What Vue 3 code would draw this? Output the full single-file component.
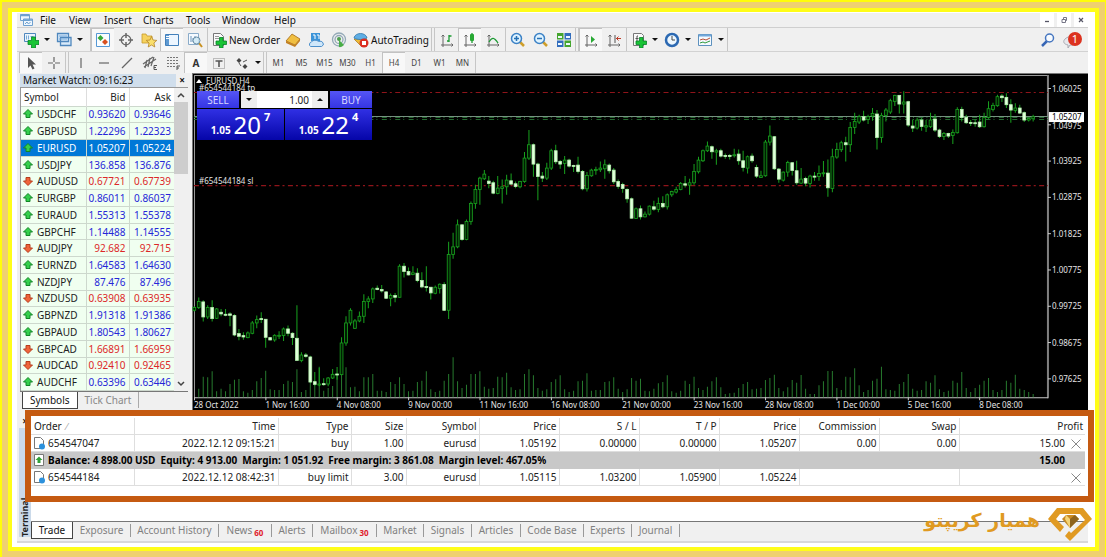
<script setup>
import { ref } from 'vue'

const menus = ['File', 'View', 'Insert', 'Charts', 'Tools', 'Window', 'Help']
const frames = ['M1', 'M5', 'M15', 'M30', 'H1', 'H4', 'D1', 'W1', 'MN']
const timeframe = ref('H4')
const lots = ref('1.00')

const quotes = [
  ['USDCHF', '0.93620', '0.93646', 1],
  ['GBPUSD', '1.22296', '1.22323', 1],
  ['EURUSD', '1.05207', '1.05224', 1],
  ['USDJPY', '136.858', '136.876', 1],
  ['AUDUSD', '0.67721', '0.67739', 0],
  ['EURGBP', '0.86011', '0.86037', 1],
  ['EURAUD', '1.55313', '1.55378', 1],
  ['GBPCHF', '1.14488', '1.14555', 1],
  ['AUDJPY', '92.682', '92.715', 0],
  ['EURNZD', '1.64583', '1.64630', 1],
  ['NZDJPY', '87.476', '87.496', 1],
  ['NZDUSD', '0.63908', '0.63935', 0],
  ['GBPNZD', '1.91318', '1.91386', 1],
  ['GBPAUD', '1.80543', '1.80627', 1],
  ['GBPCAD', '1.66891', '1.66959', 0],
  ['AUDCAD', '0.92410', '0.92465', 0],
  ['AUDCHF', '0.63396', '0.63446', 1],
]

const columns = ['Time', 'Type', 'Size', 'Symbol', 'Price', 'S / L', 'T / P', 'Price', 'Commission', 'Swap']
const openOrder = ['2022.12.12 09:15:21', 'buy', '1.00', 'eurusd', '1.05192', '0.00000', '0.00000', '1.05207', '0.00', '0.00']
const pendingOrder = ['2022.12.12 08:42:31', 'buy limit', '3.00', 'eurusd', '1.05115', '1.03200', '1.05900', '1.05224']

const tabs = [
  ['Trade'], ['Exposure'], ['Account History'], ['News', '60'], ['Alerts'], ['Mailbox', '30'],
  ['Market'], ['Signals'], ['Articles'], ['Code Base'], ['Experts'], ['Journal'],
]

const dates = ['28 Oct 2022', '1 Nov 16:00', '4 Nov 08:00', '9 Nov 00:00', '11 Nov 16:00', '16 Nov 08:00', '21 Nov 00:00', '23 Nov 16:00', '28 Nov 08:00', '1 Dec 00:00', '5 Dec 16:00', '8 Dec 08:00']
const prices = ['1.06025', '1.04975', '1.03925', '1.02875', '1.01825', '1.00775', '0.99725', '0.98675', '0.97625']

// Bars as high, body top, body bottom, low in thirds of a pixel; u = rising, d = falling.
const october = `198,202,210,214u 172,184,202,206u 180,185,230,244d 195,202,230,236u 180,202,235,244d 203,206,234,236u 206,216,221,228d 206,222,224,228d 216,221,225,258d 222,226,284,288d 266,280,288,300d 276,286,290,298d 274,278,292,294u 242,248,279,282u 226,238,248,264u 216,235,238,248d 236,237,291,322d 290,292,299,300d 282,285,299,304u 273,285,287,296u 262,266,286,302u 256,266,279,288d 276,279,292,314d 195,294,360,362d 336,344,361,366u 338,344,348,352d 346,350,425,428d 395,424,432,436d 382,431,433,438u 414,430,432,436d 410,413,431,438u 386,402,413,416u 380,401,403,418d 291,308,403,405u 228,248,308,316u 204,210,248,256u 236,242,264,266u 214,228,242,246u 162,184,228,248u 168,176,184,204u 142,146,176,188u 136,144,148,150d 134,148,152,157d 152,155,174,176d 160,166,174,198u 158,166,171,186d 72,78,171,172u 68,78,94,112d 82,94,104,106d 78,98,103,105u 84,99,121,126d 96,121,140,144d 78,139,142,154d 140,141,158,178d 136,141,159,162u 130,132,145,160u 126,133,210,212d`
const november = `485,523,690,716u 458,500,523,536u 418,434,500,504u 432,434,478,482d 418,424,478,480u 364,370,424,434u 314,328,370,386u 290,294,328,374u 270,282,296,300u 288,303,310,324d 302,308,339,342d 288,324,340,342u 298,320,325,370u 284,300,320,344u 280,302,312,314d 304,311,319,324d 302,304,320,324u 216,234,304,308u 150,194,234,240u 190,194,252,290d 248,252,289,360d 276,288,294,306d 248,264,294,300u 206,212,264,270u 194,212,245,252d 240,244,252,266d 228,240,250,282u 236,240,258,262d 254,256,258,276d 230,255,274,280d 270,274,326,330d 276,286,326,334u 266,270,287,290u 260,268,271,284u 244,264,269,276u 238,254,266,296u 250,255,272,280d 264,270,305,312d 298,304,319,326d 308,313,325,338d 324,328,356,368d 352,356,414,416d 382,386,415,416u 376,386,410,418d 394,402,410,412u 376,378,402,406u 362,380,387,392d 352,370,388,396u 348,370,380,384d 340,344,380,388u 332,334,344,350u 320,328,336,340u 306,310,328,330u 288,311,315,322d 296,308,315,344u 252,274,308,314u 230,240,275,280u 208,212,242,246u 184,198,212,216u 196,200,215,236d 206,212,216,254u 206,212,228,232d 220,226,228,236d 222,226,228,238d 206,224,227,232u 208,222,242,254d 212,242,262,274d 226,230,264,280u 220,228,242,248d 254,262,288,294d 272,287,292,294u 180,186,287,290u 136,168,186,196u 168,170,266,270d 264,267,297,308d 274,276,300,304u 242,247,276,290u 246,248,271,286d 242,272,308,314d 264,297,309,312u 290,295,309,318d 284,288,310,322u 276,288,290,302d 256,280,289,302u 243,278,281,290u 238,279,323,350d 206,230,325,336u 188,208,231,236u 182,188,209,216u 170,188,194,244d 126,142,194,216u 98,124,142,162u 104,110,126,132u 92,110,120,124d 104,110,118,132u 84,100,108,122u 90,102,172,208d 98,106,172,188u 84,90,106,124u 56,62,96,102u 44,46,64,78u 45,46,72,100d 34,66,72,100u 62,65,135,140d 118,138,144,156d 112,120,144,148u 114,120,139,152d 120,137,141,156u 98,120,140,144u 102,117,150,156d 146,150,169,174d 156,160,169,180u 158,160,168,174d 148,157,166,192u 82,88,158,160u 80,88,112,124d 104,112,128,132d 120,127,130,138d 118,128,131,140d 104,126,140,144d 98,112,140,142u 64,86,112,116u 68,76,88,94u 44,50,77,80u 42,48,53,66d 40,52,74,84d 58,74,90,128d 70,84,91,98u 74,84,99,102d 94,98,120,126d 112,115,120,124u 104,110,116,124u`

const step = 4.457
const barX = (i) => 194.3 + i * step
const parse = (text, top) => text.split(' ').map((s) => {
  const [high, open, close, low] = s.slice(0, -1).split(',').map((n) => Number(n) / 3 + top)
  return { high, open, close, low, up: s.endsWith('u') }
})
const candles = [...parse(october, 240), ...parse(november, 80)].map((c, i) => ({ ...c, x: barX(i) }))

const volumes = [0, 26, 62, 60, 78, 18, 26, 18, 40, 53, 55, 18, 14, 22, 48, 58, 80, 24, 22, 22, 40, 50, 46, 84, 16, 22, 78, 50, 92, 20, 28, 34, 72, 92, 90, 30, 32, 18, 60, 60, 70, 20, 20, 16, 46, 40, 60, 40, 18, 20, 46, 50, 78, 24, 16, 20, 50, 70, 120, 48, 28, 38, 70, 70, 78, 32, 26, 28, 62, 60, 74, 30, 22, 24, 70, 84, 66, 28, 20, 24, 46, 54, 66, 24, 16, 20, 48, 50, 72, 20, 22, 22, 46, 48, 60, 26, 16, 24, 58, 50, 56, 20, 18, 26, 42, 46, 66, 18, 14, 20, 50, 40, 62, 28, 22, 32, 48, 60, 30, 10, 12, 14, 28, 40, 46, 24, 26, 28, 52, 58, 68, 28, 18, 30, 52, 44, 67, 26, 10, 10, 36, 48, 79, 79, 28, 22, 62, 60, 87, 36, 16, 22, 50, 56, 92, 24, 22, 20, 40, 46, 70, 26, 20, 22, 48, 44, 66, 24, 16, 20, 50, 44, 76, 28, 16, 28, 38, 50, 58, 22, 16, 22, 50, 44, 68, 26, 22, 16, 10]
</script>

<template>
  <div class="edge"><div class="band"><div class="page">
    <main class="app">
      <header class="menubar">
        <svg class="appicon" viewBox="0 0 16 14"><path d="M1.500 1.500h9v6h-9z M4.500 6h9v6.500h-9z" fill="#eef6fd" stroke="#6fa0cf"/><path d="M1.500 2.500h9M4.500 7h9" stroke="#6fa0cf" stroke-width="1.500"/><path d="M6 11l2-2 1.500 2 2-2" stroke="#6fa0cf" fill="none"/></svg>
        <nav class="menus"><button v-for="m in menus" :key="m">{{ m }}</button></nav>
        <div class="winbtns">
          <button aria-label="Minimize"><svg viewBox="0 0 14 14"><path d="M5 8.500h4" stroke="#556" stroke-width="1.300"/></svg></button>
          <button aria-label="Restore"><svg viewBox="0 0 14 14"><path d="M5 6.500h3.500v3h-3.500z M6.500 6v-1.500h3v3h-1" fill="none" stroke="#778" /></svg></button>
          <button aria-label="Close"><svg viewBox="0 0 14 14"><path d="M5 5l4 4M9 5l-4 4" stroke="#556" stroke-width="1.200"/></svg></button>
        </div>
      </header>

      <div class="toolbar">
        <button class="tb" aria-label="New chart"><svg viewBox="0 0 16 16"><path d="M1.500 1.500h11v8h-11z" fill="#eaf4fc" stroke="#4f87bd"/><path d="M3.500 3.500v4m2-4v4m2-3h3" stroke="#78a9d5"/><path d="M8.500 5h4v3.500H16v4h-3.500V16h-4v-3.500H5v-4h3.500z" fill="#19c435" stroke="#08832a" stroke-width=".8"/></svg></button>
        <button class="caret" aria-label="Charts list"></button>
        <button class="tb" aria-label="Profiles"><svg viewBox="0 0 16 16"><path d="M4.500 5.500h10.500v8h-10.500z M1.500 1.500h11v8h-11z" fill="#d9eafa" stroke="#4f87bd" stroke-width="1.300"/><path d="M3 4h8M3 7h8" stroke="#75a9dc"/></svg></button>
        <button class="caret" aria-label="Profiles list"></button>
        <i class="sep six"></i>
        <button class="tb on" aria-label="Market Watch"><svg viewBox="0 0 16 16"><path d="M1.500 1.500h13v13h-13z" fill="#fbfdff" stroke="#5598d5"/><path d="M5.500 3L8.500 6l-3 3-3-3z" fill="#37a936"/><path d="M10 7l3 3-3 3-3-3z" fill="#d9501e"/></svg></button>
        <button class="tb" aria-label="Data Window"><svg viewBox="0 0 16 16"><path d="M8 1v5M8 10v5M1 8h5M10 8h5" stroke="#666" stroke-width="1.500"/><circle cx="8" cy="8" r="4.800" fill="none" stroke="#666" stroke-width="1.300"/></svg></button>
        <button class="tb" aria-label="Navigator"><svg viewBox="0 0 16 16"><path d="M1 2h4l1 2h5v7H1z" fill="#f6d25e" stroke="#c79a2c" stroke-width=".8"/><path d="M10.500 4.500l1.500 3.500 3.800.4-2.900 2.600.9 4-3.300-2-3.300 2 .9-4-2.900-2.600 3.800-.4z" fill="#fadf6c" stroke="#b5852b" stroke-width=".8"/></svg></button>
        <button class="tb on" aria-label="Terminal"><svg viewBox="0 0 16 16"><path d="M1.500 2.500h13v11h-13z" fill="#edf6ff" stroke="#4380bb"/><path d="M2 3h3v10H2z" fill="#5f9ad2"/><path d="M2 4.500h3M2 6.500h3" stroke="#fff"/></svg></button>
        <button class="tb" aria-label="Strategy Tester"><svg viewBox="0 0 16 16"><path d="M1.500 1.500h10v11h-10z" fill="#f5faff" stroke="#8aabc9"/><path d="M4 4v6m2-4v4m2-6v3" stroke="#6893bb"/><path d="M12 11l3 4" stroke="#c99121" stroke-width="2"/><circle cx="9.500" cy="8.500" r="3.500" fill="#cce7f4" fill-opacity=".8" stroke="#688ca5"/></svg></button>
        <i class="sep"></i>
        <button class="wide order"><svg viewBox="0 0 16 16"><path d="M2.500 1.500h7l3 3v9h-10z" fill="#fafafa" stroke="#777"/><path d="M4 4.500h4M4 6.500h6" stroke="#999"/><path d="M8.500 5.500h3.500V9h3.500v3.500H12V16H8.500v-3.500H5V9h3.500z" fill="#19c435" stroke="#08832a" stroke-width=".8"/></svg>New Order</button>
        <button class="tb" aria-label="MetaEditor"><svg viewBox="0 0 16 16"><path d="M1 9l6-7 8 5-5 6z" fill="#f0bf41" stroke="#a36a16" stroke-width=".8"/><path d="M1 9l9 4 5-6v2l-5 6-9-4z" fill="#c38022"/></svg></button>
        <button class="tb" aria-label="Virtual hosting"><svg viewBox="0 0 16 16"><path d="M3 1h9v8H3z" fill="#3c94d8"/><path d="M5 3h2v4M9 3h2v4" stroke="#fff" fill="none"/><path d="M2.500 14.500a2.500 2.500 0 0 1 1-4.500 4 3 0 0 1 7-.5 3 2.500 0 0 1 3 5z" fill="#cfe7fa" stroke="#4c8fcb"/></svg></button>
        <button class="tb" aria-label="Signals"><svg viewBox="0 0 16 16"><g fill="none" stroke="#93a9b7" stroke-width="1.300"><circle cx="8" cy="7.500" r="6.500"/><circle cx="8" cy="7.500" r="4"/></g><circle cx="8" cy="7" r="2" fill="#4d9f50"/><path d="M8 8l5 5c-3 3-5 2-5 2z" fill="#49ad47"/></svg></button>
        <button class="wide auto"><svg viewBox="0 0 16 16"><path d="M1 7l7 7 6-7z" fill="#edbc39" stroke="#b07d20" stroke-width=".8"/><path d="M1 6c1-6 12-6 13 0-3 2-10 2-13 0z" fill="#5faee4" stroke="#3477ab" stroke-width=".8"/><circle cx="11" cy="11" r="4.500" fill="#db2d20"/><path d="M9 9h4v4H9z" fill="#fff"/></svg>AutoTrading</button>
        <i class="sep four"></i>
        <button class="tb" aria-label="Bar chart"><svg viewBox="0 0 16 16"><path d="M4 3v12M2 13h12M2.500 4.500L4 3l1.500 1.500M12.500 11.500L14 13l-1.500 1.500" class="axis"/><path d="M10 3v7M8 9h2M10 4h2.500" class="grn"/></svg></button>
        <button class="tb on" aria-label="Candlesticks"><svg viewBox="0 0 16 16"><path d="M4 3v12M2 13h12M2.500 4.500L4 3l1.500 1.500M12.500 11.500L14 13l-1.500 1.500" class="axis"/><path d="M10 1v10" class="grn"/><rect x="8" y="2" width="4" height="7" rx="1" fill="#28a934"/></svg></button>
        <button class="tb" aria-label="Line chart"><svg viewBox="0 0 16 16"><path d="M4 3v12M2 13h12M2.500 4.500L4 3l1.500 1.500M12.500 11.500L14 13l-1.500 1.500" class="axis"/><path d="M4 10c3-5 5-5 9 1" class="grn"/></svg></button>
        <i class="sep"></i>
        <button class="tb" aria-label="Zoom in"><svg viewBox="0 0 16 16"><path d="M10 10l4 4" stroke="#ce9e2a" stroke-width="2.500"/><circle cx="6.500" cy="6.500" r="5" fill="#dff3ff" stroke="#3c82c6" stroke-width="1.500"/><path d="M4 6.500h5M6.500 4v5" stroke="#2670b4" stroke-width="1.500"/></svg></button>
        <button class="tb" aria-label="Zoom out"><svg viewBox="0 0 16 16"><path d="M10 10l4 4" stroke="#ce9e2a" stroke-width="2.500"/><circle cx="6.500" cy="6.500" r="5" fill="#dff3ff" stroke="#3c82c6" stroke-width="1.500"/><path d="M4 6.500h5" stroke="#2670b4" stroke-width="1.500"/></svg></button>
        <button class="tb" aria-label="Tile windows"><svg viewBox="0 0 16 16"><path d="M1 1h6.500v6.500H1zM8.500 8.500H15V15H8.500z" fill="#45a52e"/><path d="M8.500 1H15v6.500H8.500zM1 8.500h6.500V15H1z" fill="#326dbd"/><path d="M2 4h4v2H2zM10 4h4v2h-4zM2 11h4v2H2zM10 11h4v2h-4z" fill="#edf8ff"/></svg></button>
        <i class="sep four"></i>
        <button class="tb on" aria-label="Auto scroll"><svg viewBox="0 0 16 16"><path d="M4 3v12M2 13h12M2.500 4.500L4 3l1.500 1.500M12.500 11.500L14 13l-1.500 1.500" class="axis"/><path d="M8 4l4 3.500L8 11z" fill="#28a934"/></svg></button>
        <button class="tb" aria-label="Chart shift"><svg viewBox="0 0 16 16"><path d="M4 3v12M2 13h12M2.500 4.500L4 3l1.500 1.500M12.500 11.500L14 13l-1.500 1.500" class="axis"/><path d="M9 3v8" stroke="#555"/><path d="M15 6.500h-5M12.500 4.500l-2 2 2 2" stroke="#bd3d2a" fill="none"/></svg></button>
        <i class="sep"></i>
        <button class="tb" aria-label="Indicators"><svg viewBox="0 0 16 16"><path d="M2.500 1.500h8l2 2v10h-10z" fill="#fafafa" stroke="#777"/><path d="M7 4H6v6M4.500 6.500h3" stroke="#555" fill="none"/><path d="M8.500 5.500h3.500V9h3.500v3.500H12V16H8.500v-3.500H5V9h3.500z" fill="#19c435" stroke="#08832a" stroke-width=".8"/></svg></button>
        <button class="caret" aria-label="Indicators list"></button>
        <button class="tb" aria-label="Periods"><svg viewBox="0 0 16 16"><circle cx="8" cy="8" r="6" fill="#eef8ff" stroke="#2c69b2" stroke-width="2.500"/><path d="M8 4v4h3" stroke="#444" fill="none"/></svg></button>
        <button class="caret" aria-label="Periods list"></button>
        <button class="tb" aria-label="Templates"><svg viewBox="0 0 16 16"><path d="M1.500 2.500h13v11h-13z" fill="#f4faff" stroke="#5e91be"/><path d="M2 3.500h12" stroke="#72a9dc" stroke-width="2"/><path d="M3 8l3-1 3 1 4-2" stroke="#b84e36" fill="none"/><path d="M3 11l3-1 2 1 5-2" stroke="#319a3d" fill="none"/></svg></button>
        <button class="caret" aria-label="Templates list"></button>
        <i class="sep"></i>
        <div class="right">
          <button aria-label="Search"><svg viewBox="0 0 16 16"><path d="M7 9l-5 5" stroke="#3766b5" stroke-width="2.500"/><circle cx="9.500" cy="6" r="4" fill="#f7fbff" stroke="#4575bf" stroke-width="1.500"/></svg></button>
          <button aria-label="Notifications" class="notes"><svg viewBox="0 0 20 18"><path d="M3 8c5-5 13-1 11 3-1 4-5 3-6 3l-2 3v-3C1 13 1 10 3 8z" fill="#e8e8ec" stroke="#aaaab2"/><circle cx="13" cy="8" r="7" fill="#dc321f"/></svg><b>1</b></button>
        </div>
      </div>

      <div class="toolbar second">
        <button class="tb on" aria-label="Cursor"><svg viewBox="0 0 16 16"><path d="M5 2v11l2.500-2.500 2 4 2-1-2-4H13z" fill="#555"/></svg></button>
        <button class="tb" aria-label="Crosshair"><svg viewBox="0 0 16 16"><path d="M8 2v5M8 9v5M2 8h5M9 8h5" class="ln"/></svg></button>
        <i class="sep four"></i>
        <button class="tb" aria-label="Vertical line"><svg viewBox="0 0 16 16"><path d="M8 3v10" class="ln"/></svg></button>
        <button class="tb" aria-label="Horizontal line"><svg viewBox="0 0 16 16"><path d="M3 8h10" class="ln"/></svg></button>
        <button class="tb" aria-label="Trendline"><svg viewBox="0 0 16 16"><path d="M3 13L13 3" class="ln"/></svg></button>
        <button class="tb" aria-label="Equidistant channel"><svg viewBox="0 0 16 16"><path d="M1 9L11 2M2 12L14 4M5 5L3 13M8 3L6 12M12 2L9 11" class="ln"/><path d="M15 10.500h-3v4h3M12 12.500h2" stroke="#555" fill="none"/></svg></button>
        <button class="tb" aria-label="Fibonacci"><svg viewBox="0 0 16 16"><path d="M2 2.500h12M2 5.500h12M2 8.500h12M2 11.500h8" stroke="#777" stroke-dasharray="2 1"/><path d="M15 11h-3v4M12 13h2" stroke="#555" fill="none"/></svg></button>
        <button class="tb on letter">A</button>
        <button class="tb" aria-label="Text label"><svg viewBox="0 0 16 16"><path d="M2.500 3.500h11v10h-11z" fill="none" stroke="#888" stroke-dasharray="1 1"/><path d="M4.500 6h7M8 6v6" stroke="#555" stroke-width="1.600"/></svg></button>
        <button class="tb" aria-label="Arrows"><svg viewBox="0 0 16 16"><path d="M5 3l2.500 2.500L5 8 2.500 5.500zM11 9l2.500 2.500L11 14l-2.500-2.500z" fill="#444"/><path d="M5 8l2 3M9 7l4-2" stroke="#555"/></svg></button>
        <button class="caret" aria-label="Arrows list"></button>
        <i class="sep four"></i>
        <button v-for="f in frames" :key="f" class="tb tf" :class="{ on: f === timeframe }" @click="timeframe = f">{{ f }}</button>
        <i class="sep"></i>
      </div>

      <div class="work">
        <section class="watch">
          <h2>Market Watch: 09:16:23<button aria-label="Close Market Watch">×</button></h2>
          <div class="list">
            <table>
              <thead><tr><th>Symbol</th><th>Bid</th><th>Ask</th></tr></thead>
              <tbody>
                <tr v-for="q in quotes" :key="q[0]" :class="{ down: !q[3], sel: q[0] === 'EURUSD' }">
                  <td><svg viewBox="0 0 10 10"><path v-if="q[3]" d="M5 .5L9.500 5H7v3.500H3V5H.5z" fill="#35cf4d" stroke="#128526"/><path v-else d="M5 9.500L.5 5H3V1.500h4V5h2.500z" fill="#f0643b" stroke="#b63c1c"/></svg>{{ q[0] }}</td>
                  <td>{{ q[1] }}</td><td>{{ q[2] }}</td>
                </tr>
              </tbody>
            </table>
            <div class="scroll">
              <svg viewBox="0 0 14 14"><path d="M4 9l3-3 3 3" /></svg>
              <span></span>
              <svg viewBox="0 0 14 14"><path d="M4 5l3 3 3-3" /></svg>
            </div>
          </div>
          <div class="watchtabs"><button class="active">Symbols</button><button>Tick Chart</button></div>
        </section>

        <section class="chart">
          <svg class="plot" viewBox="192 73 895 337">
            <rect x="192" y="73" width="895" height="337" fill="#000"/>
            <path d="M192.500 410V73.500H1087" stroke="#777" fill="none"/>
            <path d="M194.500 397V75.500H1047" stroke="#999" fill="none"/>
            <path d="M1047 75V398" stroke="#808080" stroke-width="2"/>
            <path d="M194 397.500H1047" stroke="#c8c8c8"/>
            <path d="M194 92.500H1047M194 185.500H1047" stroke="#8f141a" stroke-dasharray="5 3 2 3.400"/>
            <path d="M194 116.500H1047" stroke="#75917f"/>
            <path d="M194 117.500H1047M194 119.500H1047" stroke="#23682f" stroke-dasharray="5 3 1 4.400"/>
            <path v-for="(v, i) in volumes" :key="'v' + i" :d="`M${barX(i)} 397v${-v / 3}`" stroke="#277a2e"/>
            <g v-for="c in candles" :key="c.x">
              <path :d="`M${c.x} ${c.high}V${c.low}`" stroke="#18a31e"/>
              <rect :x="c.x - 1.400" :y="c.open" width="2.800" :height="Math.max(c.close - c.open, 1)" :fill="c.up ? '#001d02' : '#e2ffdc'" :stroke="c.up ? '#18a31e' : '#b9f5b2'" stroke-width=".8"/>
            </g>
            <g class="axistext">
              <template v-for="(p, i) in prices" :key="p">
                <path :d="`M1047 ${88.5 + i * 36.25}h3`" stroke="#ccc"/>
                <text x="1051" :y="(i === 1 ? 92.5 : 91.5) + i * 36.25">{{ p }}</text>
              </template>
              <rect x="1048" y="112" width="35" height="10" fill="#fff"/>
              <text x="1051" y="120" class="now">1.05207</text>
              <template v-for="(d, i) in dates" :key="d">
                <path :d="`M${194.5 + i * 71.3} 397v3`" stroke="#ccc"/>
                <text :x="194 + i * 71.3" y="408">{{ d }}</text>
              </template>
              <text x="206" y="84">EURUSD,H4</text>
              <text x="199" y="91">#654544184 tp</text>
              <text x="199" y="184">#654544184 sl</text>
              <path d="M196 83l3-4 3 4z" fill="#fff"/>
            </g>
          </svg>
          <div class="trade">
            <button class="side">SELL</button>
            <div class="lots"><button aria-label="Less"></button><input v-model="lots" aria-label="Volume"><button aria-label="More" class="up"></button></div>
            <button class="side">BUY</button>
            <div class="quote"><b>1.05</b><span>20</span><sup>7</sup></div>
            <div class="quote"><b>1.05</b><span>22</span><sup>4</sup></div>
          </div>
        </section>
      </div>

      <section class="terminal">
        <aside><button aria-label="Close Terminal">×</button><h2>Terminal</h2></aside>
        <div class="body">
          <table>
            <colgroup><col class="c1"><col class="c2"><col class="c3"><col class="c4"><col class="c5"><col v-for="n in 6" :key="n" class="c6"><col></colgroup>
            <thead><tr><th>Order <i>⁄</i></th><th v-for="(c, i) in columns" :key="i">{{ c }}</th><th>Profit</th></tr></thead>
            <tbody>
              <tr>
                <td><svg class="doc" viewBox="0 0 14 14"><path d="M2.500 1.500h6l3 3v8h-9z" fill="#fff" stroke="#777"/><circle cx="10" cy="10.500" r="3" fill="#2d91dc"/></svg>654547047</td>
                <td v-for="(c, i) in openOrder" :key="i">{{ c }}</td>
                <td>15.00<button aria-label="Close order"><svg viewBox="0 0 12 12"><path d="M1.500 1.500l9 9M10.500 1.500l-9 9"/></svg></button></td>
              </tr>
              <tr class="balance">
                <td colspan="11"><svg class="doc" viewBox="0 0 14 14"><path d="M2.500 1.500h9v11h-9z" fill="#fff" stroke="#777"/><path d="M7 3.500l3.500 3.500H8.500v3h-3V7h-2z" fill="#32a13a"/></svg>Balance: 4 898.00 USD&nbsp; Equity: 4 913.00&nbsp; Margin: 1 051.92&nbsp; Free margin: 3 861.08&nbsp; Margin level: 467.05%</td>
                <td>15.00</td>
              </tr>
              <tr>
                <td><svg class="doc" viewBox="0 0 14 14"><path d="M2.500 1.500h6l3 3v8h-9z" fill="#fff" stroke="#777"/><circle cx="10" cy="10.500" r="3" fill="#2d91dc"/></svg>654544184</td>
                <td v-for="(c, i) in pendingOrder" :key="i">{{ c }}</td><td colspan="2"></td>
                <td><button aria-label="Delete order"><svg viewBox="0 0 12 12"><path d="M1.500 1.500l9 9M10.500 1.500l-9 9"/></svg></button></td>
              </tr>
            </tbody>
          </table>
          <nav class="tabs"><button v-for="(t, i) in tabs" :key="t[0]" :class="{ active: i === 0 }">{{ t[0] }}<b v-if="t[1]">{{ t[1] }}</b></button></nav>
        </div>
        <div class="highlight"></div>
        <div class="brand"><span lang="fa" dir="rtl">همیار کریپتو</span>
          <svg viewBox="0 0 46 34"><path d="M10 1h26l9 11-22 22-5-5 4-5 2 2L38 13l-5-6H13l-4 5 8 8-4 5L1 12z" fill="#e09a22"/><path d="M15 12l4-4h9l4 4-9 9z" fill="#c88a24"/><path d="M19 8l-1 4 5 9V12z" fill="#f3d477"/><path d="M23 12l5-4 4 4-9 9z" fill="#8e641e"/></svg>
        </div>
      </section>
    </main>
  </div></div></div>
</template>

<style>
body { margin: 0; }
</style>

<style scoped>
* { box-sizing: border-box; }
button { font: inherit; color: inherit; background: none; border: 0; padding: 0; margin: 0; white-space: nowrap; }
h2 { margin: 0; font: inherit; }
table { border-collapse: collapse; table-layout: fixed; width: 100%; }
th { font-weight: 400; }
th, td { padding: 0; white-space: nowrap; }
svg { display: block; }
.edge { border: solid #fffd08; border-width: 2px 1px 0 2px; font: 10px/14px "Noto Sans", "Open Sans", sans-serif; color: #222; }
.band { border: 6px solid #efd070; }
.page { border: 4px solid #fffd18; background: #fff; min-height: calc(100vh - 14px); padding: 1px 7px 4px 5px; }
.app { background: #f0f0f0; }
.menubar { display: flex; height: 15px; border-bottom: 1px solid #cfcfcf; }
.appicon { width: 16px; height: 14px; margin: 0 5px 0 2px; }
.menus { display: grid; grid-template-columns: 29px 35px 39px 43px 36px 52px 30px; height: 14px; color: #111; }
.menus button { text-align: left; }
.winbtns { margin-left: auto; display: flex; gap: 3px; }
.winbtns button { width: 14px; height: 14px; background: #fff; }
.toolbar { display: flex; height: 23px; padding-left: 2px; align-items: stretch; }
.toolbar.second { height: 22px; border-top: 1px solid #d2d2d2; }
.tb { width: 23px; display: grid; place-items: center; flex: none; }
.tb svg, .wide svg { width: 16px; height: 16px; }
.on { background: #f8f8f8; border: solid #c2c2c2; border-width: 1px 0 0 1px; }
.caret { width: 10px; flex: none; display: grid; place-items: center; }
.caret::before { content: ""; border: 3px solid transparent; border-top-color: #111; border-bottom: 0; }
.sep { width: 2px; flex: none; border-right: 1px solid #c6c6c6; }
.sep.four { width: 4px; border-left: 1px solid #c6c6c6; }
.sep.six { width: 6px; }
.wide { display: flex; align-items: center; flex: none; color: #111; }
.wide svg { margin: 0 2px 0 3px; flex: none; }
.order { width: 73px; }
.auto { width: 81px; }
.axis { fill: none; stroke: #666; stroke-width: 1; }
.grn { fill: none; stroke: #1b9a32; stroke-width: 1.3; }
.ln { fill: none; stroke: #666; stroke-width: 1.2; }
.right { margin-left: auto; display: flex; align-items: center; gap: 6px; padding-right: 6px; }
.right svg { width: 16px; height: 16px; }
.right .notes { position: relative; }
.right .notes svg { width: 20px; height: 18px; }
.notes b { position: absolute; left: 6px; top: 1px; width: 14px; text-align: center; color: #fff; font-weight: 400; font-size: 11px; }
.letter { font-weight: 700; color: #333; }
.tf { font-size: 8px; color: #444; }
.work { display: flex; }
.watch { width: 175px; flex: none; padding: 1px 4px 0 3px; display: flex; flex-direction: column; }
.watch h2 { display: flex; justify-content: space-between; background: #d0deec; height: 13px; line-height: 13px; padding: 0 0 0 3px; color: #111; }
.watch h2 button { width: 12px; background: #f0f0f0; font-weight: 700; }
.list { display: flex; border: solid #999; border-width: 1px 0 0 1px; }
.list table { background: #f0fff0; height: 303px; }
.list thead { background: #fff; }
.list th { text-align: right; height: 18px; padding-right: 3px; }
.list th:first-child { text-align: left; padding-left: 3px; width: 65px; }
.list th:nth-child(2) { width: 43px; }
.list th + th { border-left: 1px solid #ddd; }
.list td { text-align: right; color: #2626d8; border: 1px solid #cdd8cd; border-width: 1px 0 1px 1px; padding-right: 3px; line-height: 14px; }
.list td:first-child { text-align: left; color: #222; border-left: 0; padding-left: 2px; }
.list td svg { width: 10px; height: 10px; display: inline-block; vertical-align: -1px; margin-right: 4px; }
.list .down td + td { color: #dc2828; }
.list .sel td, .list .sel td:first-child { background: #0078d7; color: #fff; }
.scroll { width: 14px; flex: none; background: #f0f0f0; display: flex; flex-direction: column; }
.scroll span { height: 72px; background: #cdcdcd; margin-bottom: auto; }
.scroll svg { width: 14px; height: 14px; }
.scroll path { fill: none; stroke: #444; stroke-width: 1.5; }
.watchtabs { border-top: 1px solid #777; display: flex; height: 17px; color: #888; padding-left: 2px; }
.watchtabs button { padding: 0 7px; border-right: 1px solid #aaa; height: 16px; }
.watchtabs .active { background: #fff; color: #111; border: solid #444; border-width: 0 1px 1px; height: 17px; }
.chart { flex: 1; min-width: 0; position: relative; }
.plot { width: 100%; }
.axistext { font-size: 8px; fill: #e4e4e4; }
.axistext .now { fill: #000; }
.trade { position: absolute; left: 5px; top: 18px; width: 175px; display: grid; grid-template-columns: 42px 1fr 42px; grid-template-rows: 17px 31px; gap: 1px; background: #000; color: #fff; }
.side { background: linear-gradient(#5555f5, #3535e3); color: #d8d8ff; }
.lots { display: grid; grid-template-columns: 16px minmax(0, 1fr) 16px; background: #eee; margin: 0 1px; }
.lots input { font: inherit; border: 0; padding: 0 3px; text-align: right; width: 100%; background: #fff; color: #222; }
.lots button { display: grid; place-items: center; }
.lots button::before { content: ""; border: 3px solid transparent; border-top-color: #111; border-bottom: 0; }
.lots .up::before { border: 3px solid transparent; border-bottom-color: #111; border-top: 0; }
.quote { grid-row: 2; grid-column: 1 / 4; width: 87px; display: flex; align-items: flex-end; justify-content: center; gap: 3px; background: linear-gradient(#3030e4, #0505a8); line-height: 12px; }
.quote + .quote { justify-self: end; }
.quote b { padding-bottom: 4px; }
.quote span { font-size: 24px; line-height: 30px; }
.quote sup { align-self: flex-start; font-weight: 700; font-size: 11px; padding-top: 2px; }
.terminal { position: relative; display: flex; height: 133px; border-bottom: 2px solid #d8d8d8; }
aside { width: 14px; flex: none; display: flex; flex-direction: column; padding: 4px 0 4px 2px; align-items: center; }
aside button { font-weight: 700; }
aside h2 { flex: 1; width: 12px; background: #cbdaea; writing-mode: vertical-rl; transform: rotate(180deg); font-size: 9px; line-height: 12px; font-weight: 700; text-align: left; }
.body { flex: 1; min-width: 0; background: #fff; padding-top: 8px; display: flex; flex-direction: column; }
.body table { width: calc(100% - 3px); }
.c1 { width: 103px; } .c2 { width: 144px; } .c3 { width: 73px; } .c4 { width: 55px; } .c5 { width: 73px; } .c6 { width: 80px; }
.body th, .body td { height: 17px; text-align: right; padding-right: 2px; border: solid #dedede; border-width: 0 1px 1px 0; line-height: 14px; }
.body th { height: 16px; }
.body th:first-child, .body td:first-child { text-align: left; padding-left: 3px; }
.body td:first-child { padding-left: 1px; }
.body th:last-child, .body td:last-child { border-right: 0; }
.body td:last-child { padding-right: 20px; position: relative; }
.body td button { position: absolute; right: 3px; top: 3px; }
.body td button svg { width: 12px; height: 12px; stroke: #888; }
.body th i { color: #999; font-size: 8px; margin-left: 2px; }
.doc { display: inline-block; width: 14px; height: 14px; vertical-align: -3px; margin-right: 2px; }
.balance { background: #c8c8c8; font-weight: 700; color: #000; }
.body .balance td { border-color: #c8c8c8; }
.tabs { display: grid; grid-template-columns: 42px 58px 88px 53px 41px 64px 47px 48px 49px 63px 48px 48px; margin-top: auto; height: 20px; border-top: 1px solid #777; background: #f0f0f0; color: #808080; align-items: start; }
.tabs button { height: 13px; line-height: 13px; margin-top: 2px; border-right: 1px solid #999; }
.tabs .active { background: #fff; color: #111; margin-top: 0; height: 17px; border: solid #444; border-width: 0 1px 1px; }
.tabs b { color: #e0202b; font-size: 8px; vertical-align: -2px; margin-left: 2px; }
.highlight { position: absolute; left: 8px; right: -6px; top: 0; height: 92px; border: 6px solid #c55a11; pointer-events: none; }
.brand { position: absolute; right: -5px; bottom: 0; display: flex; align-items: center; gap: 7px; color: #e09a22; font: 700 19px/26px "DejaVu Sans", sans-serif; }
.brand span { padding-bottom: 8px; }
.brand svg { width: 46px; height: 34px; }
</style>
